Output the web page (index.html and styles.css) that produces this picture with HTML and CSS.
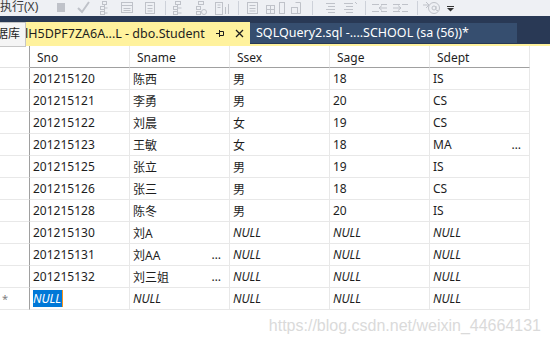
FILE: index.html
```html
<!DOCTYPE html>
<html lang="zh">
<head>
<meta charset="utf-8">
<title>dbo.Student</title>
<link rel="stylesheet" href="styles.css">
</head>
<body>
<div class="toolbar">
  <span class="tb-text">执行(X)</span>
  <svg class="tb-g1" width="109" height="16" viewBox="0 0 109 16">
    <rect x="5" y="3" width="8" height="9" fill="#bfc2c9"/>
    <polyline points="26,8 30,12 37,2" fill="none" stroke="#bfc2c9" stroke-width="2"/>
    <g fill="none" stroke="#bfc2c9">
      <rect x="50.5" y="1.5" width="4" height="3"/><rect x="48.5" y="6.5" width="4" height="3"/><rect x="48.5" y="11.5" width="4" height="3"/>
      <path d="M52.5 4.5v9M52.5 8h3M52.5 13h3"/>
      <rect x="69.5" y="2.5" width="11" height="10"/><path d="M69.5 5.5h11M71.5 8.5h7M71.5 10.5h7"/>
      <rect x="93.5" y="2.5" width="9" height="11"/><path d="M95.5 5.5h5M95.5 8.5h5M95.5 11h5"/>
    </g>
  </svg>
  <span class="tb-sep"></span>
  <svg class="tb-g" width="64" height="16" viewBox="0 0 64 16">
    <g fill="none" stroke="#bfc2c9">
      <rect x="5.5" y="1.5" width="5" height="3"/><rect x="3.5" y="6.5" width="4" height="3"/><rect x="3.5" y="11.5" width="4" height="3"/>
      <path d="M7.5 4.5v9M7.5 8h4M7.5 13h4"/>
      <rect x="28.5" y="1.5" width="5" height="3"/><rect x="26.5" y="6.5" width="4" height="3"/><rect x="26.5" y="11.5" width="4" height="3"/>
      <circle cx="34" cy="12" r="2.5"/>
      <rect x="45.5" y="2.5" width="7" height="12"/><path d="M47.5 5h3M47.5 7.5h3M55.5 7v7M58.5 4v10"/>
    </g>
  </svg>
  <span class="tb-sep"></span>
  <svg class="tb-g" width="65" height="16" viewBox="0 0 65 16">
    <g fill="none" stroke="#bfc2c9">
      <rect x="4.5" y="2.5" width="10" height="11"/><path d="M6.5 5.5h6M6.5 8.5h6M6.5 11h6"/>
      <rect x="23.5" y="5.5" width="8" height="8"/><path d="M23.5 9.5h8M27.5 5.5v8"/>
      <rect x="36.5" y="2.5" width="5" height="11"/>
      <rect x="48.5" y="7.5" width="6" height="6"/><path d="M52.5 2.5h5v11h-3"/>
    </g>
  </svg>
  <span class="tb-sep"></span>
  <svg class="tb-g" width="44" height="16" viewBox="0 0 44 16">
    <g fill="none" stroke="#bfc2c9">
      <path d="M9 3.5h9M11 6.5h7M9 9.5h9M11 12.5h7"/>
      <path d="M27 3.5h9M29 6.5h7M27 9.5h9M29 12.5h7M38 2l2 2"/>
    </g>
  </svg>
  <span class="tb-sep"></span>
  <svg class="tb-g" width="43" height="16" viewBox="0 0 43 16">
    <g fill="none" stroke="#bfc2c9">
      <path d="M2 4.5h7M11 4.5h6M2 11.5h7M11 11.5h6M9 8h8M9 8l3-2.5M9 8l3 2.5"/>
      <path d="M23 4.5h7M32 4.5h6M23 11.5h7M32 11.5h6M23 8h8M31 8l-3-2.5M31 8l-3 2.5"/>
    </g>
  </svg>
  <span class="tb-sep"></span>
  <svg class="tb-g" width="22" height="16" viewBox="0 0 22 16">
    <g fill="none" stroke="#bfc2c9">
      <circle cx="12" cy="8" r="5.5"/><circle cx="12" cy="8" r="2"/><path d="M14 6v3.5q0 1.5 2 1"/>
      <path d="M1 5h6M4 2l3 3-3 3"/>
    </g>
  </svg>
  <svg class="tb-g" width="12" height="16" viewBox="0 0 12 16">
    <rect x="3" y="6" width="7" height="1" fill="#333"/>
    <polygon points="3,8 10,8 6.5,11.5" fill="#333"/>
  </svg>
</div>

<div class="tabband">
  <div class="side-tab">数据库</div>
  <div class="tab-active">
    <span class="tab-title">lH5DPF7ZA6A...L - dbo.Student</span>
    <svg class="pin" width="8" height="8" viewBox="0 0 8 8">
      <path d="M0 4.5h3M3.5 1v7M3.5 2.5h4v4h-4" fill="none" stroke="#1e1e1e"/>
    </svg>
    <svg class="close" width="9" height="9" viewBox="0 0 9 9">
      <path d="M1 1l7 7M8 1l-7 7" stroke="#1e1e1e" stroke-width="1.3"/>
    </svg>
  </div>
  <div class="tab-doc">SQLQuery2.sql -....SCHOOL (sa (56))*</div>
</div>

<div class="grid">
  <div class="rh hd"></div>
  <div class="c hd">Sno</div><div class="c hd">Sname</div><div class="c hd">Ssex</div><div class="c hd">Sage</div><div class="c hd">Sdept</div>

  <div class="rh"></div>
  <div class="c">201215120</div><div class="c">陈西</div><div class="c">男</div><div class="c">18</div><div class="c">IS</div>

  <div class="rh"></div>
  <div class="c">201215121</div><div class="c">李勇</div><div class="c">男</div><div class="c">20</div><div class="c">CS</div>

  <div class="rh"></div>
  <div class="c">201215122</div><div class="c">刘晨</div><div class="c">女</div><div class="c">19</div><div class="c">CS</div>

  <div class="rh"></div>
  <div class="c">201215123</div><div class="c">王敏</div><div class="c">女</div><div class="c">18</div><div class="c">MA<span class="more">…</span></div>

  <div class="rh"></div>
  <div class="c">201215125</div><div class="c">张立</div><div class="c">男</div><div class="c">19</div><div class="c">IS</div>

  <div class="rh"></div>
  <div class="c">201215126</div><div class="c">张三</div><div class="c">男</div><div class="c">18</div><div class="c">CS</div>

  <div class="rh"></div>
  <div class="c">201215128</div><div class="c">陈冬</div><div class="c">男</div><div class="c">20</div><div class="c">IS</div>

  <div class="rh"></div>
  <div class="c">201215130</div><div class="c">刘A</div><div class="c null">NULL</div><div class="c null">NULL</div><div class="c null">NULL</div>

  <div class="rh"></div>
  <div class="c">201215131</div><div class="c">刘AA<span class="more">…</span></div><div class="c null">NULL</div><div class="c null">NULL</div><div class="c null">NULL</div>

  <div class="rh"></div>
  <div class="c">201215132</div><div class="c">刘三姐<span class="more">…</span></div><div class="c null">NULL</div><div class="c null">NULL</div><div class="c null">NULL</div>

  <div class="rh star">*</div>
  <div class="c null"><span class="sel">NULL</span></div><div class="c null">NULL</div><div class="c null">NULL</div><div class="c null">NULL</div><div class="c null">NULL</div>
</div>

<div class="watermark">https://blog.csdn.net/weixin_44664131</div>
</body>
</html>
```

FILE: styles.css
```css
* {
  box-sizing: border-box;
}

body {
  margin: 0;
  width: 550px;
  height: 339px;
  overflow: hidden;
  background: #ffffff;
  font-family: "Noto Sans", "Noto Sans CJK SC", sans-serif;
  font-size: 12px;
  color: #1e1e1e;
}

/* toolbar */
.toolbar {
  height: 16px;
  background: #eef0f4;
  display: flex;
  align-items: center;
  overflow: hidden;
}

.tb-text {
  width: 52px;
  flex: none;
  color: #3c3c3c;
  font-size: 12px;
  line-height: 16px;
  margin-top: -3px;
  white-space: nowrap;
}

.tb-g1,
.tb-g {
  display: block;
  flex: none;
}

.tb-sep {
  width: 1px;
  height: 14px;
  margin: 0 4px;
  background: #cdd1d9;
  flex: none;
}

/* document tab band */
.tabband {
  height: 30px;
  background: #293955;
  border-bottom: 2px solid #fff29d;
  display: flex;
  align-items: flex-start;
}

.side-tab {
  width: 26px;
  height: 25px;
  margin-top: 6px;
  flex: none;
  background: #f5f5f5;
  border: 1px solid #c6c6c6;
  border-left: none;
  overflow: hidden;
  white-space: nowrap;
  text-indent: -16px;
  line-height: 22px;
  position: relative;
  z-index: 2;
  color: #1e1e1e;
}

.tab-active {
  width: 228px;
  height: 22px;
  margin-top: 6px;
  margin-left: -4px;
  flex: none;
  background: #fff29d;
  display: flex;
  align-items: center;
  padding-left: 3px;
  white-space: nowrap;
  position: relative;
  z-index: 1;
}

.tab-title {
  font-size: 12.5px;
  color: #1e1e1e;
}

.pin {
  display: block;
  margin-left: auto;
  margin-right: 11px;
}

.close {
  display: block;
  margin-right: 6px;
}

.tab-doc {
  width: 267px;
  height: 20px;
  margin-top: 7px;
  flex: none;
  background: #364e6f;
  color: #ffffff;
  padding-left: 6px;
  line-height: 20px;
  font-size: 12.5px;
  white-space: nowrap;
}

/* data grid */
.grid {
  display: grid;
  grid-template-columns: 30px repeat(5, 100px);
  grid-auto-rows: 22px;
}

.c,
.rh {
  border-right: 1px solid #e8e8e8;
  border-bottom: 1px solid #e8e8e8;
  display: flex;
  align-items: center;
  padding-left: 3px;
  white-space: nowrap;
  overflow: hidden;
}

.rh {
  border-right-color: #a0a0a0;
  padding-left: 2px;
}

.c.hd {
  border-bottom-color: #a0a0a0;
  padding-left: 7px;
  padding-top: 1px;
}

.rh.hd {
  border-bottom-color: #e2e2e2;
}

.null {
  font-style: italic;
}

.more {
  margin-left: auto;
  padding-right: 8px;
}

.sel {
  background: #0078d7;
  color: #ffffff;
  line-height: 17px;
  padding-right: 1px;
  border-right: 1px solid #f7941d;
}

.star {
  color: #808080;
  font-size: 11px;
}

.watermark {
  margin-top: 7px;
  padding-right: 9px;
  text-align: right;
  font-family: "Liberation Sans", Arial, sans-serif;
  font-size: 16px;
  line-height: 18px;
  color: #dadada;
  white-space: nowrap;
}
```
